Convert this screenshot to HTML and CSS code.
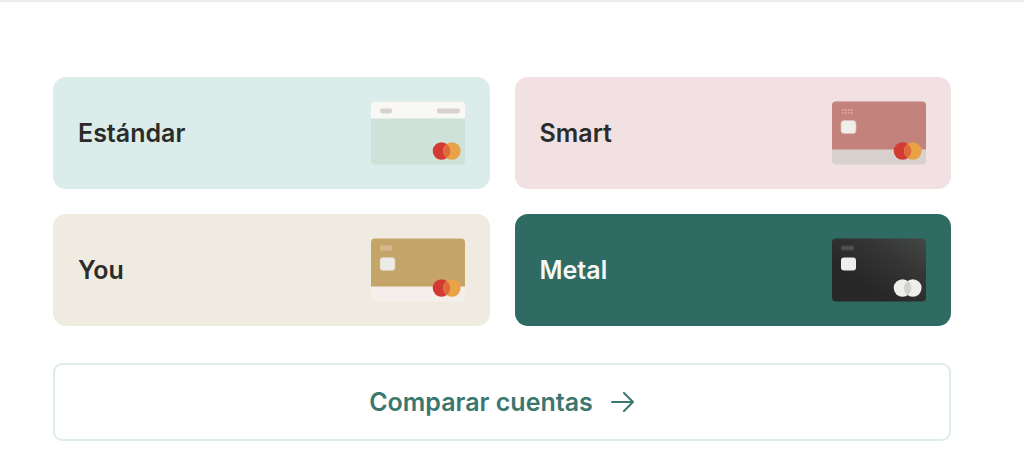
FILE: index.html
```html
<!DOCTYPE html>
<html lang="es">
<head>
  <meta charset="UTF-8" />
  <title>Cuentas</title>
  <meta name="viewport" content="width=device-width, initial-scale=1" />
  <link rel="stylesheet" href="styles.css">
</head>
<body>
  <main class="accounts">
    <nav class="account-grid" aria-label="Cuentas">
      <a href="#estandar" class="account standard">
        <span>Estándar</span>
        <svg class="card" viewBox="0 0 94 63" aria-hidden="true">
          <rect width="94" height="63" rx="4" fill="#cfe2d9"/>
          <path d="M0 17V4a4 4 0 0 1 4-4h86a4 4 0 0 1 4 4v13z" fill="#f8f8f5"/>
          <rect x="9" y="7" width="12" height="5" rx="2" fill="#d9d1cd"/>
          <rect x="66" y="7" width="23" height="5" rx="2" fill="#d9d1cd"/>
          <circle cx="70.500" cy="49.500" r="8.800" fill="#d23b34"/>
          <circle cx="80.800" cy="49.500" r="8.800" fill="#e9a245"/>
          <path d="M75.650 42.400a8.800 8.800 0 0 1 0 14.200a8.800 8.800 0 0 1 0-14.200z" fill="#df6b3b"/>
        </svg>
      </a>
      <a href="#smart" class="account smart">
        <span>Smart</span>
        <svg class="card" viewBox="0 0 94 63" aria-hidden="true">
          <rect width="94" height="63" rx="4" fill="#d9d1ce"/>
          <path d="M0 48V4a4 4 0 0 1 4-4h86a4 4 0 0 1 4 4v44z" fill="#c3827c"/>
          <path d="M10 8.500h12M10 11.500h12" stroke="#d9aca7" stroke-width="1.300" stroke-dasharray="2 1"/>
          <rect x="9" y="19" width="15" height="13" rx="3" fill="#efeeea" stroke="#dcc0b5" stroke-width=".7"/>
          <circle cx="70.500" cy="49.500" r="8.800" fill="#d23b34"/>
          <circle cx="80.800" cy="49.500" r="8.800" fill="#e9a245"/>
          <path d="M75.650 42.400a8.800 8.800 0 0 1 0 14.200a8.800 8.800 0 0 1 0-14.200z" fill="#df6b3b"/>
        </svg>
      </a>
      <a href="#you" class="account you">
        <span>You</span>
        <svg class="card" viewBox="0 0 94 63" aria-hidden="true">
          <rect width="94" height="63" rx="4" fill="#f5efeb"/>
          <path d="M0 48V4a4 4 0 0 1 4-4h86a4 4 0 0 1 4 4v44z" fill="#c5a46a"/>
          <rect x="9" y="7" width="12" height="5" rx="1" fill="#d4b98a"/>
          <rect x="9" y="19" width="15" height="13" rx="3" fill="#ecebe6" stroke="#ddcdb0" stroke-width=".7"/>
          <circle cx="70.500" cy="49.500" r="8.800" fill="#d23b34"/>
          <circle cx="80.800" cy="49.500" r="8.800" fill="#e9a245"/>
          <path d="M75.650 42.400a8.800 8.800 0 0 1 0 14.200a8.800 8.800 0 0 1 0-14.200z" fill="#df6b3b"/>
        </svg>
      </a>
      <a href="#metal" class="account metal">
        <span>Metal</span>
        <svg class="card" viewBox="0 0 94 63" aria-hidden="true">
          <defs>
            <linearGradient id="metal-fill" x1="0" y1="1" x2="1" y2="0">
              <stop offset=".3" stop-color="#272727"/>
              <stop offset=".7" stop-color="#363636"/>
              <stop offset="1" stop-color="#454847"/>
            </linearGradient>
          </defs>
          <rect width="94" height="63" rx="4" fill="url(#metal-fill)"/>
          <rect x="9" y="7" width="13" height="5" rx="1" fill="#464b49"/>
          <path d="M12 9.500h9" stroke="#777b79" stroke-dasharray="1 1.500"/>
          <rect x="9" y="19" width="15" height="13" rx="3" fill="#eeeeec"/>
          <circle cx="70.500" cy="49.500" r="8.800" fill="#eeeeec"/>
          <circle cx="80.800" cy="49.500" r="8.800" fill="#eeeeec"/>
          <path d="M75.650 42.400a8.800 8.800 0 0 1 0 14.200a8.800 8.800 0 0 1 0-14.200z" fill="#d3cfce"/>
        </svg>
      </a>
    </nav>
    <a href="#comparar" class="compare">
      <span>Comparar cuentas</span>
      <svg class="arrow" viewBox="0 0 24 20" aria-hidden="true">
        <path d="M1 10h21M13 1l9 9-9 9"/>
      </svg>
    </a>
  </main>
</body>
</html>
```
FILE: styles.css
```css
* {
  box-sizing: border-box;
}
body {
  margin: 0;
  background: #fff;
  color: #2a2c2b;
  font-family: Inter, "Liberation Sans", sans-serif;
  font-size: 25px;
  font-weight: 600;
  line-height: 32px;
  border-top: 2px solid #ececea;
}
.accounts {
  padding: 75px 73px 24px 53px;
}
.account-grid {
  display: grid;
  grid-template-columns: 1fr 1fr;
  gap: 25px;
  margin-bottom: 37px;
}
.account {
  display: flex;
  align-items: center;
  justify-content: space-between;
  padding: 24px 25px;
  border-radius: 13px;
  color: inherit;
  text-decoration: none;
}
.standard {
  background: #dcecea;
}
.smart {
  background: #f2e1e2;
}
.you {
  background: #f0ebe0;
}
.metal {
  background: #2f6a63;
  color: #f5f8f6;
}
.card {
  display: block;
  width: 94px;
  height: 64px;
}
.compare {
  display: flex;
  align-items: center;
  justify-content: center;
  gap: 18px;
  padding: 21px;
  border: 2px solid #deedea;
  border-radius: 9px;
  color: #3b776f;
  text-decoration: none;
}
.arrow {
  width: 24px;
  height: 20px;
  fill: none;
  stroke: currentColor;
  stroke-width: 2;
  stroke-linecap: round;
  stroke-linejoin: round;
}
```
